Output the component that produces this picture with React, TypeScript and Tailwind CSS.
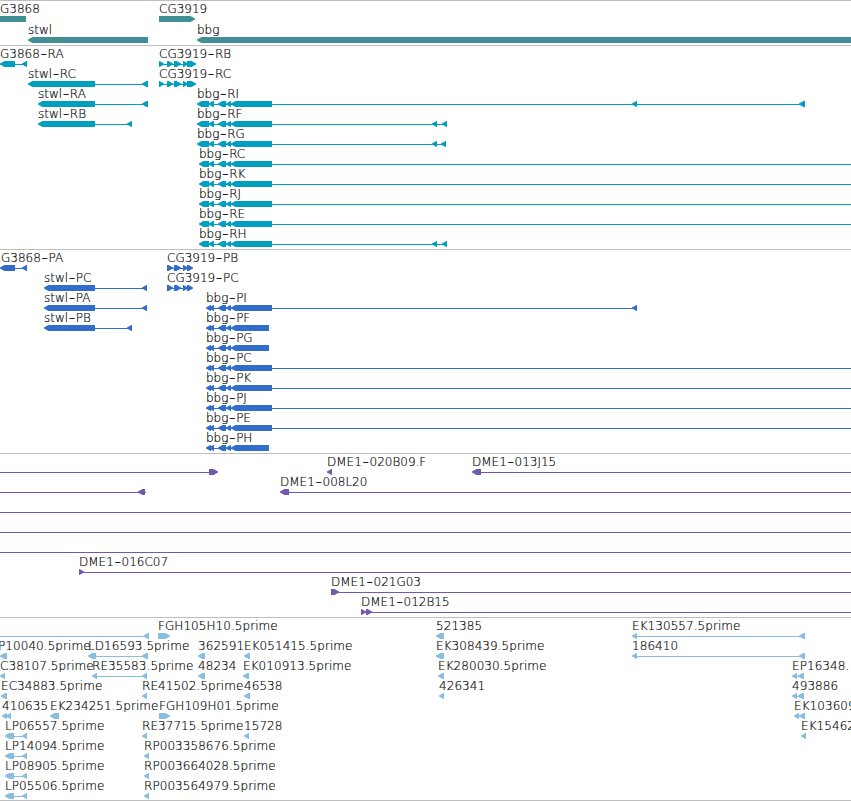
import React from 'react';

type Strand = 'left' | 'right' | 'none';

interface Feature {
    label?: string;
    x: number;
    exons: number[][];
    strand?: Strand;
    line?: [number, number];
}

interface TrackData {
    id: string;
    className: string;
    rowClass: string;
    rowHeight: number;
    rows: Feature[][];
}

const EDGE = 851;
const HEAD = 5;

// Shared 3' exons of the bbg transcripts and proteins
const bbgTail = [[218, 226], [226, 231], [231, 272]];
const bbgShort = [[218, 226], [226, 231], [231, 269]];

const bbgR = (name: string, x: number, extra: number[][], end?: number): Feature => ({
    label: `bbg-${name}`,
    x,
    exons: [[x, 209], [208.5, 214], ...bbgTail, ...extra],
    line: end ? [x + 4, end] : undefined,
});

const bbgP = (name: string, tail: number[][], extra: number[][] = [], end?: number): Feature => ({
    label: `bbg-${name}`,
    x: 206,
    exons: [[206, 211], [209, 214], ...tail, ...extra],
    line: end ? [210, end] : undefined,
});

const est = (label: string, x: number, ...exons: number[][]): Feature => ({ label, x, exons });

const tracks: TrackData[] = [
    {
        id: 'genes',
        className: 'text-[#3f8f94] h-[45px]',
        rowClass: 'h-[21px]',
        rowHeight: 21,
        rows: [
            [
                { label: 'G3868', x: 0, exons: [[0, 26]], strand: 'none' },
                { label: 'CG3919', x: 159, exons: [[159, 195]], strand: 'right' },
            ],
            [
                { label: 'stwl', x: 28, exons: [[28, 148]] },
                { label: 'bbg', x: 197, exons: [[197, 860]] },
            ],
        ],
    },
    {
        id: 'transcripts',
        className: 'text-[#009fbf] h-[204px]',
        rowClass: 'h-5',
        rowHeight: 20,
        rows: [
            [
                { label: 'G3868-RA', x: 0, exons: [[0, 15], [22, 27]] },
                { label: 'CG3919-RB', x: 159, exons: [[159, 164], [167, 173], [174, 181], [183, 188], [187, 196]], strand: 'right' },
            ],
            [
                { label: 'stwl-RC', x: 28, exons: [[28, 95], [142, 148]] },
                { label: 'CG3919-RC', x: 159, exons: [[159, 164], [167, 173], [174, 181], [183, 188], [187, 196]], strand: 'right' },
            ],
            [
                { label: 'stwl-RA', x: 38, exons: [[38, 95], [142, 148]] },
                bbgR('RI', 197, [[632, 637], [799, 805]]),
            ],
            [
                { label: 'stwl-RB', x: 38, exons: [[38, 95], [127, 132]] },
                bbgR('RF', 197, [[432, 437], [442, 447]]),
            ],
            [bbgR('RG', 197, [[432, 437], [441, 446]])],
            [bbgR('RC', 199, [], EDGE)],
            [bbgR('RK', 199, [], EDGE)],
            [bbgR('RJ', 199, [], EDGE)],
            [bbgR('RE', 199, [], EDGE)],
            [bbgR('RH', 199, [[432, 437], [442, 447]])],
        ],
    },
    {
        id: 'proteins',
        className: 'text-[#326dcc] h-[204px]',
        rowClass: 'h-5',
        rowHeight: 20,
        rows: [
            [
                { label: 'G3868-PA', x: 1, exons: [[0, 15], [22, 27]] },
                { label: 'CG3919-PB', x: 167, exons: [[167, 173], [174, 181], [183, 188], [187, 193]], strand: 'right' },
            ],
            [
                { label: 'stwl-PC', x: 44, exons: [[44, 95], [142, 147]] },
                { label: 'CG3919-PC', x: 167, exons: [[167, 173], [174, 181], [183, 188], [187, 193]], strand: 'right' },
            ],
            [
                { label: 'stwl-PA', x: 44, exons: [[44, 95], [142, 147]] },
                bbgP('PI', bbgTail, [[632, 637]]),
            ],
            [
                { label: 'stwl-PB', x: 44, exons: [[44, 95], [127, 132]] },
                bbgP('PF', bbgShort),
            ],
            [bbgP('PG', bbgShort)],
            [bbgP('PC', bbgTail, [], EDGE)],
            [bbgP('PK', bbgTail, [], EDGE)],
            [bbgP('PJ', bbgTail, [], EDGE)],
            [bbgP('PE', bbgTail, [], EDGE)],
            [bbgP('PH', bbgShort)],
        ],
    },
    {
        id: 'clones',
        className: 'text-[#7359a9] h-[164px]',
        rowClass: 'h-5',
        rowHeight: 20,
        rows: [
            [
                { x: 0, exons: [[209, 218]], strand: 'right', line: [0, 210] },
                { label: 'DME1-020B09.F', x: 327, exons: [[327, 332]] },
                { label: 'DME1-013J15', x: 472, exons: [[472, 481]], line: [476, EDGE] },
            ],
            [
                { x: 0, exons: [[138, 145]], line: [0, 146] },
                { label: 'DME1-008L20', x: 280, exons: [[280, 289]], line: [284, EDGE] },
            ],
            [{ x: 0, exons: [], line: [0, EDGE] }],
            [{ x: 0, exons: [], line: [0, EDGE] }],
            [{ x: 0, exons: [], line: [0, EDGE] }],
            [{ label: 'DME1-016C07', x: 79, exons: [[79, 84]], strand: 'right', line: [80, EDGE] }],
            [{ label: 'DME1-021G03', x: 331, exons: [[331, 339]], strand: 'right', line: [332, EDGE] }],
            [{ label: 'DME1-012B15', x: 361, exons: [[361, 366], [366, 372]], strand: 'right', line: [362, EDGE] }],
        ],
    },
    {
        id: 'ests',
        className: 'text-[#88bedf] h-[183px] tracking-[0.06px]',
        rowClass: 'h-5',
        rowHeight: 20,
        rows: [
            [
                { x: 0, exons: [[143.5, 149]], line: [0, 148] },
                { label: 'FGH105H10.5prime', x: 158, exons: [[158, 170]], strand: 'right' },
                est('521385', 436, [436, 444]),
                est('EK130557.5prime', 632, [632, 637], [799, 805]),
            ],
            [
                est('P10040.5prime', -2, [0, 7]),
                est('LD16593.5prime', 88, [88, 96], [142, 148]),
                est('362591', 198, [198, 205]),
                est('EK051415.5prime', 244, [244, 250]),
                est('EK308439.5prime', 436, [436, 444]),
                est('186410', 632, [632, 637], [799, 805]),
            ],
            [
                est('C38107.5prime', 0, [0, 5]),
                est('RE35583.5prime', 92, [92, 97], [142, 147]),
                est('48234', 198, [198, 205]),
                est('EK010913.5prime', 243, [243, 249]),
                est('EK280030.5prime', 438, [438, 444]),
                est('EP16348.', 792, [792, 797], [798, 804]),
            ],
            [
                est('EC34883.5prime', 1, [1, 7]),
                est('RE41502.5prime', 142, [142, 147]),
                est('46538', 244, [244, 250]),
                est('426341', 439, [439, 444]),
                est('493886', 792, [792, 797], [798, 804]),
            ],
            [
                est('410635', 2, [2, 7], [6, 11]),
                est('EK234251.5prime', 50, [50, 59]),
                { label: 'FGH109H01.5prime', x: 159, exons: [[159, 170]], strand: 'right' },
                est('EK103609', 794, [794, 799], [799, 805]),
            ],
            [
                est('LP06557.5prime', 5, [5, 14], [22, 27]),
                est('RE37715.5prime', 142, [142, 147]),
                est('15728', 244, [244, 249]),
                est('EK15462', 801, [801, 806]),
            ],
            [est('LP14094.5prime', 5, [5, 14], [22, 27]), est('RP003358676.5prime', 144, [144, 149])],
            [est('LP08905.5prime', 5, [5, 14], [22, 27]), est('RP003664028.5prime', 144, [144, 149])],
            [est('LP05506.5prime', 5, [5, 14], [22, 27]), est('RP003564979.5prime', 144, [144, 149])],
        ],
    },
];

// Heads are slightly blunt so that the tip fills a whole pixel
function exonPoints([a, b]: number[], strand: Strand) {
    const head = Math.min(HEAD, b - a) - 0.5;
    if (strand === 'none') return `${a},14 ${b},14 ${b},20 ${a},20`;
    if (strand === 'right') return `${a},14 ${b - head},14 ${b},16.5 ${b},17.5 ${b - head},20 ${a},20`;
    return `${b},14 ${a + head},14 ${a},16.5 ${a},17.5 ${a + head},20 ${b},20`;
}

function FeatureGlyph({ label, x, exons, strand = 'left', line }: Feature) {
    const span = line ?? (exons.length > 1 ? [exons[0][0] + 2, exons[exons.length - 1][1] - 2] : null);
    const parts = label ? label.split('-') : [];

    return (
        <g>
            {span && <rect x={span[0]} y={17} width={span[1] - span[0]} height={1} />}
            {exons.map((exon, i) => (
                <polygon key={i} points={exonPoints(exon, strand)} />
            ))}
            {label && (
                <text x={x} y={11} className="fill-black stroke-black stroke-[0.18px]">
                    {parts[0]}
                    {parts.length > 1 && <tspan dx={0.6} dy={1} className="text-[18px]">-</tspan>}
                    {parts.length > 1 && <tspan dx={0.6} dy={-1}>{parts[1]}</tspan>}
                </text>
            )}
        </g>
    );
}

function Track({ className, rowClass, rowHeight, rows }: TrackData) {
    return (
        <section className={`flex flex-col border-t border-[#bebebe] pt-px ${className}`}>
            {rows.map((row, i) => (
                <svg
                    key={i}
                    viewBox={`0 0 851 ${rowHeight}`}
                    className={`w-[851px] shrink-0 overflow-visible fill-current ${rowClass}`}
                >
                    {row.map((feature, j) => (
                        <FeatureGlyph key={j} {...feature} />
                    ))}
                </svg>
            ))}
        </section>
    );
}

export default function App() {
    return (
        <main className="flex h-[801px] w-[851px] flex-col overflow-hidden border-b border-[#bebebe] bg-white font-['DejaVu_Sans',sans-serif] text-xs font-extralight">
            {tracks.map((track) => (
                <Track key={track.id} {...track} />
            ))}
        </main>
    );
}
